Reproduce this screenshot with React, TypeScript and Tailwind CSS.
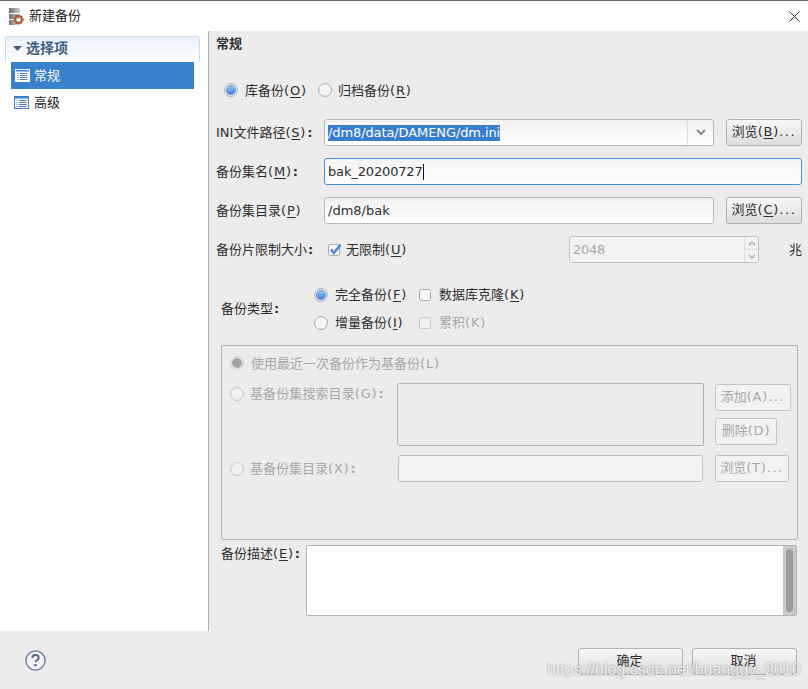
import React from "react";

const Radio = ({ on, off }: { on?: boolean; off?: boolean }) => (
  <svg width="14" height="14" viewBox="0 0 14 14" className="shrink-0">
    <defs>
      <linearGradient id="rb" x1="0" y1="0" x2="0" y2="1">
        <stop offset="0" stopColor="#9cc6f4" />
        <stop offset="1" stopColor="#3a87de" />
      </linearGradient>
    </defs>
    <circle cx="7" cy="7" r="6.4" fill={off ? "#f2f2f2" : "#f7f7f7"} stroke={off ? "#c6c6c6" : "#a9a9a9"} strokeWidth="1" />
    {on && <circle cx="7" cy="7" r="4.6" fill={off ? "#a3a3a3" : "url(#rb)"} stroke={off ? "#969696" : "#2a6fc0"} strokeWidth="0.6" />}
  </svg>
);

const Check = ({ on, off }: { on?: boolean; off?: boolean }) => (
  <svg width="14" height="14" viewBox="0 0 14 14" className="shrink-0">
    <rect x="0.5" y="1.5" width="11" height="11" rx="2" fill={off ? "#f0f0f0" : "#f8f8f8"} stroke={off ? "#c6c6c6" : "#a8a8a8"} />
    {on && <path d="M3 6.5 L5.7 10 L12.5 1.8" fill="none" stroke="#4d8bd0" strokeWidth="2.6" />}
  </svg>
);

const Btn = ({ children, w, off }: { children: React.ReactNode; w: string; off?: boolean }) => (
  <div
    className={`${w} h-[27px] shrink-0 flex items-center justify-center rounded-[3px] border pb-[1px] ${
      off
        ? "border-[#c4c4c4] bg-[#f2f2f2] text-[#a8a8a8]"
        : "border-[#b2b2b2] bg-gradient-to-b from-[#f8f8f8] to-[#dcdcdc] text-[#2e2e2e]"
    }`}
  >
    {children}
  </div>
);

/* "(X)" with the wider spacing of the original toolkit font */
const Mn = ({ c, plain }: { c: string; plain?: boolean }) => (
  <span className="tracking-[0.8px]">
    (<span className={plain ? "" : "underline underline-offset-2"}>{c}</span>)
  </span>
);
const Colon = () => <span className="ml-[1px] font-bold">:</span>;
const Dots = () => <span className="tracking-[1.6px]">...</span>;

const ListIcon = ({ sel }: { sel?: boolean }) => (
  <svg width="15" height="13" viewBox="0 0 15 13" className="shrink-0">
    <rect x="0.5" y="0.5" width="14" height="12" fill={sel ? "#ffffff" : "#f6f9fd"} stroke={sel ? "#ffffff" : "#3a81cc"} />
    <rect x="1" y="1" width="13" height="1.5" fill="#3a81cc" />
    <path d="M2.5 4.5h1M5 4.5h7.5M2.5 6.5h1M5 6.5h7.5M2.5 8.5h1M5 8.5h7.5M2.5 10.5h1M5 10.5h7.5" stroke="#5a7a9c" strokeWidth="1" />
  </svg>
);

export default function App() {
  const font = { fontFamily: '"DejaVu Sans","Noto Sans CJK SC",sans-serif' };
  return (
    <div className="relative w-[808px] h-[689px] overflow-hidden bg-white flex flex-col text-[13px] leading-[18px] text-[#2e2e2e]" style={font}>
      {/* title */}
      <div className="h-[31px] shrink-0 border-t border-[#6a6a6a] bg-white flex items-center pl-[9px] pr-[8px]">
        <svg width="15" height="17" viewBox="0 0 15 17" className="shrink-0">
          <defs>
            <linearGradient id="srv" x1="0" y1="0" x2="1" y2="0">
              <stop offset="0" stopColor="#6e6e6e" />
              <stop offset="1" stopColor="#d0d0d0" />
            </linearGradient>
          </defs>
          <rect x="0" y="0" width="11" height="5" fill="url(#srv)" />
          <rect x="0" y="6" width="11" height="5" fill="url(#srv)" />
          <rect x="0" y="12" width="8" height="5" fill="url(#srv)" />
          <circle cx="9.5" cy="11.5" r="3.4" fill="none" stroke="#a9603c" strokeWidth="2.2" />
          <circle cx="9.5" cy="11.5" r="4.6" fill="none" stroke="#a9603c" strokeWidth="1.2" strokeDasharray="1.5 1.5" />
        </svg>
        <span className="ml-[5px] text-[#222]">新建备份</span>
        <svg width="11" height="11" viewBox="0 0 11 11" className="ml-auto">
          <path d="M0.5 0.5L10.5 10.5M10.5 0.5L0.5 10.5" stroke="#333" strokeWidth="1" />
        </svg>
      </div>

      <div className="flex flex-1 min-h-0">
        {/* sidebar */}
        <div className="w-[209px] shrink-0 border-r border-[#b4b4b4] bg-white pl-[5px] pr-[8px] pt-[5px]">
          <div className="h-[26px] w-[195px] rounded-t-[3px] border border-b-0 border-[#c9dff0] bg-gradient-to-b from-[#eaf2fa] to-white flex items-center pl-[7px] pb-[3px]">
            <svg width="9" height="5" viewBox="0 0 9 5"><path d="M0 0h9L4.5 5z" fill="#44607e" /></svg>
            <span className="ml-[4px] text-[14px] font-bold text-[#42607f]">选择项</span>
          </div>
          <div className="ml-[6px] w-[183px]">
            <div className="h-[27px] bg-[#3a81cc] flex items-center pl-[4px] text-white">
              <ListIcon sel />
              <span className="ml-[4px]">常规</span>
            </div>
            <div className="h-[27px] flex items-center pl-[3px] text-[#222]">
              <ListIcon />
              <span className="ml-[5px]">高级</span>
            </div>
          </div>
        </div>

        {/* main */}
        <div className="flex-1 bg-[#ececec] pl-[7px] pr-[6px] flex flex-col">
          <div className="mt-[4px] h-[18px] font-bold text-[#333]">常规</div>

          <div className="mt-[28px] h-[18px] flex items-center pl-[8px]">
            <Radio on />
            <span className="ml-[7px] mt-[2px] w-[73px] whitespace-nowrap">库备份<Mn c="O" /></span>
            <Radio />
            <span className="ml-[6px] mt-[2px] whitespace-nowrap">归档备份<Mn c="R" /></span>
          </div>

          <div className="mt-[20px] h-[27px] flex items-center">
            <span className="w-[108px] shrink-0 whitespace-nowrap">INI文件路径<Mn c="S" /><Colon /></span>
            <div className="flex-1 h-full flex items-center rounded-[3px] border border-[#bababa] bg-gradient-to-b from-[#f1f1f1] to-white pl-[3px]">
              <span className="bg-[#3a7ecb] text-white h-[16px] leading-[16px] tracking-[-0.1px]">/dm8/data/DAMENG/dm.ini</span>
              <div className="ml-auto w-[26px] h-full border-l border-[#dedede] flex items-center justify-center">
                <svg width="10" height="7" viewBox="0 0 10 7"><path d="M1 1l4 4 4-4" fill="none" stroke="#8a8a8a" strokeWidth="2" /></svg>
              </div>
            </div>
            <div className="ml-[12px]"><Btn w="w-[76px]">浏览<Mn c="B" /><Dots /></Btn></div>
          </div>

          <div className="mt-[12px] h-[27px] flex items-center">
            <span className="w-[108px] shrink-0 whitespace-nowrap">备份集名<Mn c="M" /><Colon /></span>
            <div className="flex-1 h-full flex items-center rounded-[3px] border border-[#4a90e2] bg-gradient-to-b from-[#f4f4f4] to-white pl-[3px]">
              <span className="border-r border-[#111] leading-[16px] tracking-[-0.15px]">bak_20200727</span>
            </div>
          </div>

          <div className="mt-[12px] h-[27px] flex items-center">
            <span className="w-[108px] shrink-0 whitespace-nowrap">备份集目录<Mn c="P" /></span>
            <div className="flex-1 h-full flex items-center rounded-[3px] border border-[#bababa] bg-gradient-to-b from-[#f1f1f1] to-white pl-[3px]">/dm8/bak</div>
            <div className="ml-[12px]"><Btn w="w-[76px]">浏览<Mn c="C" /><Dots /></Btn></div>
          </div>

          <div className="mt-[12px] h-[27px] flex items-center">
            <span className="w-[108px] shrink-0 whitespace-nowrap">备份片限制大小<Colon /></span>
            <div className="ml-[4px]"><Check on /></div>
            <span className="ml-[4px] whitespace-nowrap">无限制<Mn c="U" /></span>
            <div className="ml-auto w-[190px] h-full flex items-center rounded-[3px] border border-[#c2c2c2] bg-[#f2f2f2] text-[#a8a8a8] pl-[3px] tracking-[-0.3px]">
              2048
              <div className="ml-auto w-[14px] h-full border-l border-[#dcdcdc] flex flex-col">
                <div className="flex-1 flex items-center justify-center border-b border-[#dcdcdc]">
                  <svg width="8" height="5" viewBox="0 0 8 5"><path d="M1 4l3-3 3 3" fill="none" stroke="#b4b4b4" strokeWidth="1.6" /></svg>
                </div>
                <div className="flex-1 flex items-center justify-center">
                  <svg width="8" height="5" viewBox="0 0 8 5"><path d="M1 1l3 3 3-3" fill="none" stroke="#b4b4b4" strokeWidth="1.6" /></svg>
                </div>
              </div>
            </div>
            <span className="w-[43px] text-right">兆</span>
          </div>

          {/* type */}
          <div className="mt-[23px] ml-[5px] flex items-center">
            <span className="w-[93px] shrink-0 whitespace-nowrap">备份类型<Colon /></span>
            <div className="grid grid-cols-[105px_1fr] gap-y-[10px]">
              <div className="h-[18px] flex items-center"><Radio on /><span className="ml-[7px] whitespace-nowrap">完全备份<Mn c="F" /></span></div>
              <div className="h-[18px] flex items-center"><Check /><span className="ml-[6px] whitespace-nowrap">数据库克隆<Mn c="K" /></span></div>
              <div className="h-[18px] flex items-center"><Radio /><span className="ml-[7px] whitespace-nowrap">增量备份<Mn c="I" /></span></div>
              <div className="h-[18px] flex items-center"><Check off /><span className="ml-[6px] whitespace-nowrap text-[#a8a8a8]">累积<Mn c="K" plain /></span></div>
            </div>
          </div>

          {/* group */}
          <div className="mt-[13px] ml-[5px] w-[577px] h-[195px] shrink-0 border border-[#b4b4b4] rounded-[2px] pl-[8px] pt-[8px] text-[#a8a8a8]">
            <div className="h-[18px] flex items-center"><Radio on off /><span className="ml-[7px] mt-[2px] whitespace-nowrap">使用最近一次备份作为基备份<Mn c="L" plain /></span></div>
            <div className="mt-[11px] flex">
              <div className="w-[167px] shrink-0 h-[22px] flex items-center"><Radio off /><span className="ml-[6px] whitespace-nowrap tracking-[0.1px]">基备份集搜索目录<Mn c="G" plain /><Colon /></span></div>
              <div className="w-[307px] h-[63px] border border-[#b4b4b4] rounded-[2px] bg-[#ececec]" />
              <div className="ml-[11px] flex flex-col gap-[7px] pt-[1px]">
                <Btn w="w-[76px]" off>添加<Mn c="A" plain /><Dots /></Btn>
                <Btn w="w-[62px]" off>删除<Mn c="D" plain /></Btn>
              </div>
            </div>
            <div className="mt-[9px] flex items-center">
              <div className="w-[168px] shrink-0 flex items-center"><Radio off /><span className="ml-[6px] whitespace-nowrap">基备份集目录<Mn c="X" plain /><Colon /></span></div>
              <div className="w-[305px] h-[27px] border border-[#c2c2c2] rounded-[3px] bg-[#f2f2f2]" />
              <div className="ml-[12px]"><Btn w="w-[74px]" off>浏览<Mn c="T" plain /><Dots /></Btn></div>
            </div>
          </div>

          {/* description */}
          <div className="mt-[5px] ml-[5px] flex">
            <span className="w-[85px] shrink-0 whitespace-nowrap">备份描述<Mn c="E" /><Colon /></span>
            <div className="w-[491px] h-[71px] flex border border-[#b4b4b4] rounded-[2px] bg-white">
              <div className="flex-1" />
              <div className="w-[13px] bg-[#c8c8c8] flex justify-center py-[3px]">
                <div className="w-[7px] bg-[#9c9c9c] rounded-full" />
              </div>
            </div>
          </div>
        </div>
      </div>

      {/* footer */}
      <div className="h-[58px] shrink-0 bg-[#ececec] flex items-start pl-[25px] pr-[11px]">
        <svg width="21" height="21" viewBox="0 0 21 21" className="mt-[19px]">
          <circle cx="10.5" cy="10.5" r="9.6" fill="#f3f4f6" stroke="#6a7f9c" strokeWidth="1.4" />
          <path d="M7.3 8c0-2 1.5-3 3.2-3 1.9 0 3.2 1.1 3.2 2.7 0 2.4-3 2.2-3 4.6" fill="none" stroke="#55698a" strokeWidth="2" />
          <rect x="9.3" y="14" width="2.3" height="2.3" fill="#55698a" />
        </svg>
        <div className="ml-auto mt-[17px] flex gap-[9px]">
          <Btn w="w-[105px]"><span className="mr-[2px]">确定</span></Btn>
          <Btn w="w-[105px]"><span className="mr-[2px]">取消</span></Btn>
        </div>
      </div>

      {/* watermark */}
      <div
        className="absolute left-[547px] top-[660px] text-[16px] leading-[20px] whitespace-nowrap text-white/80 [text-shadow:0_0_2px_rgba(90,90,90,0.7)]"
        style={{ fontFamily: '"Liberation Sans",sans-serif' }}
      >
        https://blog.csdn.net/huanggy_2010
      </div>
    </div>
  );
}
